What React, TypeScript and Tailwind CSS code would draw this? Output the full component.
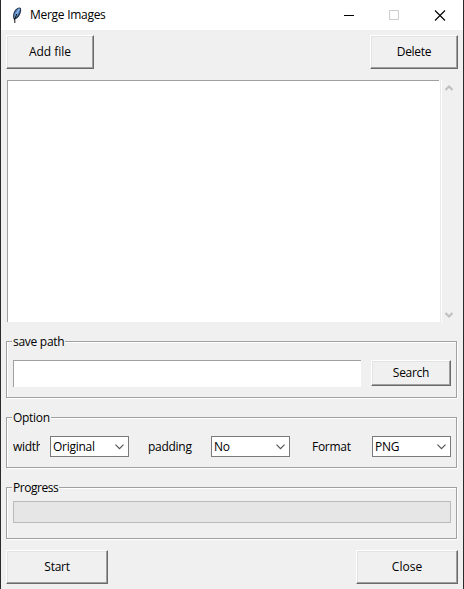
import type { ReactNode } from "react";

function RaisedButton({ children, className }: { children: ReactNode; className: string }) {
  return (
    <button
      className={`flex items-center justify-center border border-t-white border-l-white border-r-[#696969] border-b-[#696969] bg-[#f0f0f0] shadow-[inset_-1px_-1px_0_#a0a0a0,inset_1px_1px_0_#e3e3e3] ${className}`}
    >
      {children}
    </button>
  );
}

function Group({ title, titleClass, className, children }: { title: string; titleClass: string; className: string; children: ReactNode }) {
  return (
    <section
      className={`ml-[5px] w-[451px] border border-[#a0a0a0] shadow-[1px_1px_0_#fff,inset_1px_1px_0_#fff] ${className}`}
    >
      <h2 className={`-mt-[9px] ml-[5px] h-[17px] whitespace-nowrap bg-[#f0f0f0] pl-px leading-[17px] ${titleClass}`}>{title}</h2>
      {children}
    </section>
  );
}

function Combo({ value, className }: { value: string; className: string }) {
  return (
    <div className={`flex h-[21px] w-[79px] shrink-0 items-center justify-between border border-[#7a7a7a] bg-white pr-1 pl-[2px] ${className}`}>
      <span>{value}</span>
      <svg width="9" height="6" viewBox="0 0 9 6" fill="none" stroke="#555" strokeWidth="1.2">
        <path d="M.5 .7 4.5 4.7 8.5 .7" />
      </svg>
    </div>
  );
}

export default function App() {
  return (
    <div className="flex h-[589px] w-[464px] flex-col overflow-hidden border-x border-[#2b2b2b] bg-[#f0f0f0] font-['Open_Sans','Noto_Sans_CJK_KR',sans-serif] text-[12px] leading-4 tracking-[-0.28px] text-black">
      <header className="flex h-[30px] shrink-0 items-center bg-white pl-[10px]">
        <svg width="12" height="18" viewBox="0 0 12 18">
          <path d="M3.2 14.2C1 10.8 2.2 5.2 5.4 2.8 7.3 1.4 9 1.1 9.8 2c1 2-.1 6.3-2.1 8.7-1 1.3-2.2 2-3.1 2.1z" fill="#26364c" />
          <path d="M3.2 11.7C2.5 8.6 4 5 6.3 3.2c1-.8 2-1 2.8-.8.2 3.3-1.6 7.1-4.2 9.1z" fill="#5b8cc8" />
          <path d="M8.2 3C6.8 5.5 5 8.6 4 11.4" stroke="#a9c9ee" strokeWidth="1" fill="none" />
          <path d="M5.7 8 3.8 13v4" stroke="#101010" strokeWidth="1" fill="none" />
        </svg>
        <h1 className="ml-[7px] w-[80px] whitespace-nowrap">Merge Images</h1>
        <div className="ml-auto flex items-center pr-[17px]">
          <svg width="102" height="11" viewBox="0 0 102 11" fill="none">
            <path d="M0 5.5h10" stroke="#000" />
            <path d="M45.5.5h9v9h-9z" stroke="#ccc" />
            <path d="m91 .5 10 10m0-10-10 10" stroke="#000" strokeWidth="1.1" />
          </svg>
        </div>
      </header>

      <div className="mt-[5px] flex justify-between px-[5px]">
        <RaisedButton className="h-[34px] w-[88px] tracking-normal">Add file</RaisedButton>
        <RaisedButton className="h-[34px] w-[88px]">Delete</RaisedButton>
      </div>

      <div className="mt-[11px] ml-[6px] flex h-[242px] shrink-0">
        <div className="w-[432px] border-t border-l border-[#a0a0a0] bg-white" />
        <div className="w-px bg-white" />
        <div className="w-px bg-[#e9e9e9]" />
        <div className="flex w-[18px] flex-col items-center justify-between border-l border-white pt-[5px] pr-[3px] pb-[4px]">
          <svg width="8" height="6" viewBox="0 0 8 6" fill="none" stroke="#bfbfbf" strokeWidth="2">
            <path d="M.5 5 4 1.5 7.5 5" />
          </svg>
          <svg width="8" height="6" viewBox="0 0 8 6" fill="none" stroke="#bfbfbf" strokeWidth="2">
            <path d="M.5 1 4 4.5 7.5 1" />
          </svg>
        </div>
      </div>

      <Group title="save path" titleClass="w-[53px]" className="mt-[19px] h-[57px] shrink-0">
        <div className="mt-[10px] flex pl-[6px]">
          <div className="h-[27px] w-[348px] border-t border-l border-[#a0a0a0] bg-white" />
          <RaisedButton className="ml-[10px] h-[26px] w-[80px]">Search</RaisedButton>
        </div>
      </Group>

      <Group title="Option" titleClass="w-[39px]" className="mt-[19px] h-[51px] shrink-0">
        <div className="mt-[10px] flex items-center pl-[6px]">
          <span className="w-[27px] overflow-hidden whitespace-nowrap">width</span>
          <Combo value="Original" className="ml-[10px]" />
          <span className="ml-[19px] w-[63px]">padding</span>
          <Combo value="No" className="" />
          <span className="ml-[22px] w-[60px]">Format</span>
          <Combo value="PNG" className="" />
        </div>
      </Group>

      <Group title="Progress" titleClass="w-[47px] tracking-[-0.45px]" className="mt-[19px] h-[52px] shrink-0">
        <div className="mt-[5px] ml-[6px] h-[22px] w-[438px] border border-[#bcbcbc] bg-[#e6e6e6]" />
      </Group>

      <div className="mt-[11px] flex justify-between px-[5px]">
        <RaisedButton className="h-[34px] w-[102px]">Start</RaisedButton>
        <RaisedButton className="h-[34px] w-[102px] tracking-normal">Close</RaisedButton>
      </div>
    </div>
  );
}
